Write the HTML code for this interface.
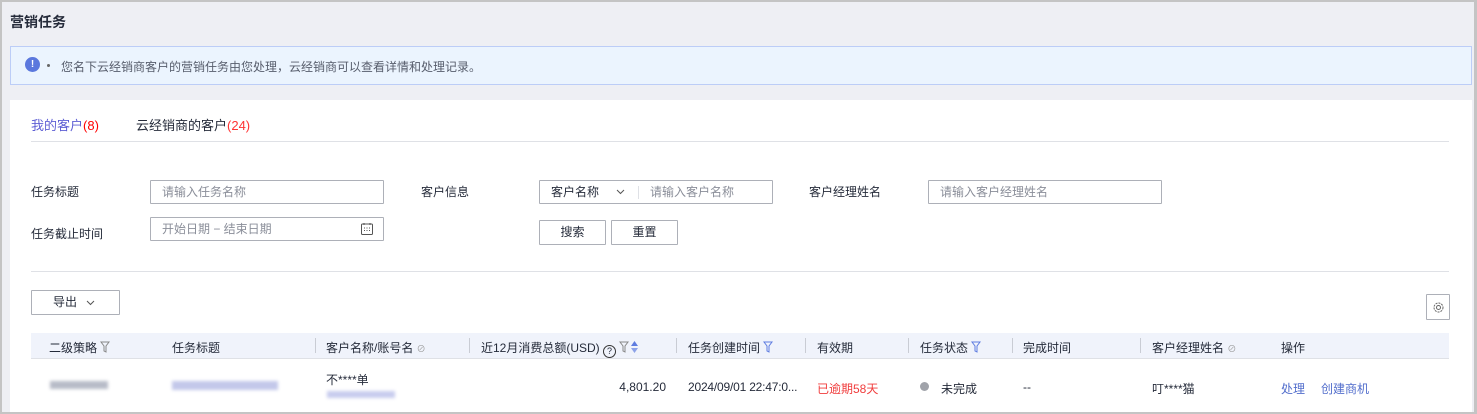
<!DOCTYPE html>
<html><head><meta charset="utf-8"><style>
*{margin:0;padding:0;box-sizing:border-box}
body{width:1477px;height:414px;overflow:hidden;background:#c4c4c4;font-family:"Liberation Sans","Noto Sans CJK SC",sans-serif;font-size:12px;color:#252b3a;position:relative}
.wrap{position:absolute;left:2px;top:2px;width:1472px;height:410px;background:#eeeff4}
.a{position:absolute;white-space:nowrap}
.inp{position:absolute;border:1px solid #adb0b8;background:#fff;height:24px;color:#8a8e99;padding-left:11px;line-height:22px;border-radius:1px}
.btn{position:absolute;border:1px solid #adb0b8;background:#fff;height:25px;text-align:center;line-height:23px;color:#252b3a;border-radius:1px}
.th{position:absolute;top:339px;color:#252b3a}
.sep{position:absolute;top:338px;width:1px;height:15px;background:#c9ccd4}
.blur{position:absolute;filter:blur(1.5px)}
.f{display:inline-block;vertical-align:-1px;margin-left:3px}
</style></head><body><div class="wrap"></div>
<div class="a" style="left:10px;top:12px;font-size:14px;font-weight:bold">营销任务</div>
<div class="a" style="left:10px;top:46px;width:1462px;height:39px;background:#ebf4fe;border:1px solid #bccdf7"></div>
<div class="a" style="left:25px;top:57px;width:15px;height:15px;border-radius:50%;background:#5b78dd;color:#fff;font-size:10px;text-align:center;line-height:15px;font-weight:bold">!</div>
<div class="a" style="left:47px;top:64px;width:3px;height:3px;border-radius:50%;background:#666"></div>
<div class="a" style="left:61px;top:58px;color:#575d6c">您名下云经销商客户的营销任务由您处理，云经销商可以查看详情和处理记录。</div>
<div class="a" style="left:10px;top:100px;width:1462px;height:312px;background:#fff"></div>
<div class="a" style="left:31px;top:115px;font-size:13px;color:#5e5fd4">我的客户<span style="color:#f00">(8)</span></div>
<div class="a" style="left:136px;top:115px;font-size:13px;color:#252b3a">云经销商的客户<span style="color:#f33">(24)</span></div>
<div class="a" style="left:31px;top:141px;width:1418px;height:1px;background:#dfe1e6"></div>
<div class="a" style="left:31px;top:183px">任务标题</div>
<div class="inp" style="left:150px;top:180px;width:234px">请输入任务名称</div>
<div class="a" style="left:421px;top:183px">客户信息</div>
<div class="inp" style="left:539px;top:180px;width:234px;color:#252b3a">客户名称<svg style="position:absolute;left:76px;top:8px" width="9" height="6" viewBox="0 0 9 6"><path d="M1 1l3.5 3.5L8 1" fill="none" stroke="#555"/></svg><span style="position:absolute;left:98px;top:5px;width:1px;height:13px;background:#dfe1e6"></span><span style="position:absolute;left:110px;color:#8a8e99">请输入客户名称</span></div>
<div class="a" style="left:809px;top:183px">客户经理姓名</div>
<div class="inp" style="left:928px;top:180px;width:234px">请输入客户经理姓名</div>
<div class="a" style="left:31px;top:225px">任务截止时间</div>
<div class="inp" style="left:150px;top:217px;width:234px">开始日期 − 结束日期
<svg style="position:absolute;left:209px;top:4px" width="14" height="14" viewBox="0 0 14 14"><rect x="1.5" y="2" width="11" height="10.5" fill="none" stroke="#555" rx="1"/><path d="M4 1v2M10 1v2" stroke="#555"/><path d="M4 6h1M6.5 6h1M9 6h1M4 8.5h1M6.5 8.5h1M9 8.5h1" stroke="#555"/></svg></div>
<div class="btn" style="left:539px;top:220px;width:67px">搜索</div>
<div class="btn" style="left:611px;top:220px;width:67px">重置</div>
<div class="a" style="left:31px;top:271px;width:1418px;height:1px;background:#dfe1e6"></div>
<div class="btn" style="left:31px;top:290px;width:89px;height:25px;text-align:left;padding-left:21px">导出<svg style="position:absolute;left:54px;top:9px" width="9" height="6" viewBox="0 0 9 6"><path d="M1 1l3.5 3.5L8 1" fill="none" stroke="#555"/></svg></div>
<div class="btn" style="left:1426px;top:294px;width:24px;height:26px">
<svg style="position:absolute;left:5px;top:6px" width="13" height="13" viewBox="0 0 13 13"><circle cx="6.5" cy="6.5" r="4.5" fill="none" stroke="#666" stroke-dasharray="2 1"/><circle cx="6.5" cy="6.5" r="2" fill="none" stroke="#666"/></svg></div>
<div class="a" style="left:31px;top:333px;width:1418px;height:26px;background:#f0f3fb;border-bottom:1px solid #dfe1e6"></div>
<div class="th" style="left:49px">二级策略<svg class="f" width="10" height="12" viewBox="0 0 10 12"><path d="M1 1h8L6 5v6L4 10V5z" fill="none" stroke="#888"/></svg></div>
<div class="th" style="left:172px">任务标题</div>
<div class="sep" style="left:315px"></div>
<div class="th" style="left:326px">客户名称/账号名 <span style="color:#999;font-size:9px">⊘</span></div>
<div class="sep" style="left:469px"></div>
<div class="th" style="left:481px">近12月消费总额(USD) <span style="display:inline-block;width:13px;height:13px;border:1px solid #333;border-radius:50%;font-size:9px;text-align:center;line-height:11px;vertical-align:-2px">?</span><svg class="f" width="10" height="12" viewBox="0 0 10 12"><path d="M1 1h8L6 5v6L4 10V5z" fill="none" stroke="#888"/></svg><svg class="f" style="margin-left:2px" width="7" height="12" viewBox="0 0 7 12"><path d="M3.5 0L7 5H0z" fill="#5e7ce0"/><path d="M3.5 12L7 7H0z" fill="#8da2e8"/></svg></div>
<div class="sep" style="left:676px"></div>
<div class="th" style="left:688px">任务创建时间<svg class="f" width="10" height="12" viewBox="0 0 10 12"><path d="M1 1h8L6 5v6L4 10V5z" fill="none" stroke="#5e7ce0"/></svg></div>
<div class="sep" style="left:805px"></div>
<div class="th" style="left:817px">有效期</div>
<div class="sep" style="left:908px"></div>
<div class="th" style="left:920px">任务状态<svg class="f" width="10" height="12" viewBox="0 0 10 12"><path d="M1 1h8L6 5v6L4 10V5z" fill="none" stroke="#5e7ce0"/></svg></div>
<div class="sep" style="left:1012px"></div>
<div class="th" style="left:1023px">完成时间</div>
<div class="sep" style="left:1140px"></div>
<div class="th" style="left:1152px">客户经理姓名 <span style="color:#999;font-size:9px">⊘</span></div>
<div class="th" style="left:1281px">操作</div>
<div class="blur" style="left:50px;top:381px;width:58px;height:8px;background:#b8bcc8"></div>
<div class="blur" style="left:172px;top:381px;width:106px;height:9px;background:#c3c8ea"></div>
<div class="a" style="left:326px;top:371px">不****单</div>
<div class="blur" style="left:327px;top:391px;width:68px;height:7px;background:#c8ccee"></div>
<div class="a" style="right:811px;top:380px">4,801.20</div>
<div class="a" style="left:688px;top:380px;letter-spacing:-0.2px">2024/09/01 22:47:0...</div>
<div class="a" style="left:817px;top:380px;color:#f03c3c">已逾期58天</div>
<div class="a" style="left:920px;top:382px;width:9px;height:9px;border-radius:50%;background:#a0a3aa"></div>
<div class="a" style="left:941px;top:380px">未完成</div>
<div class="a" style="left:1023px;top:380px">--</div>
<div class="a" style="left:1152px;top:380px">叮****猫</div>
<div class="a" style="left:1281px;top:380px;color:#526ecc">处理</div>
<div class="a" style="left:1321px;top:380px;color:#526ecc">创建商机</div>
</body></html>
